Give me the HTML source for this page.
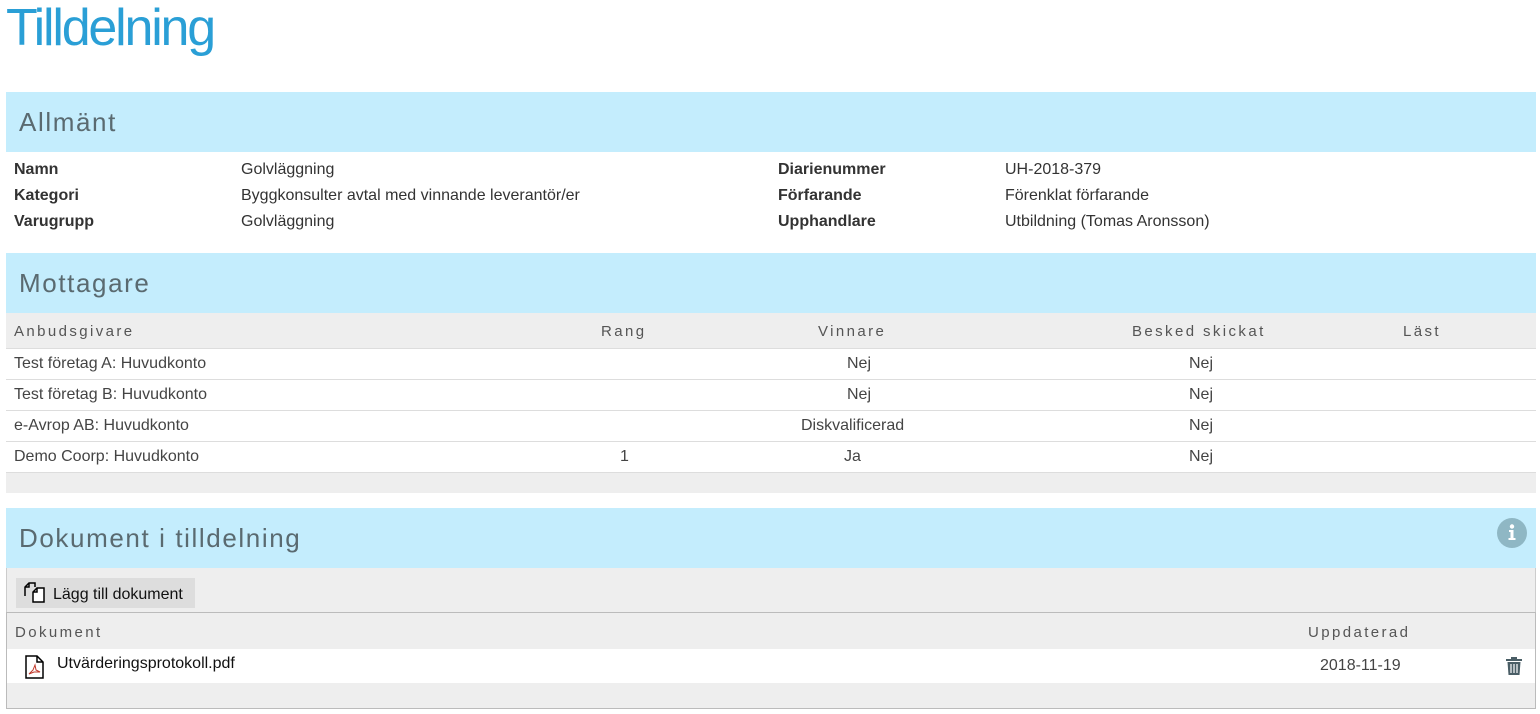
<!DOCTYPE html>
<html><head><meta charset="utf-8"><style>
*{box-sizing:border-box;margin:0;padding:0}
body{width:1540px;height:714px;background:#fff;font-family:"Liberation Sans",sans-serif;color:#333;position:relative;overflow:hidden}
.abs{position:absolute}
h1{position:absolute;left:6px;top:-2px;font-size:52px;font-weight:normal;color:#2a9fd6;letter-spacing:-2.2px}
.band{position:absolute;left:6px;width:1530px;height:60px;background:#c4edfd}
.band span{position:absolute;left:13px;top:15px;font-size:26px;letter-spacing:1.6px;color:#5a6a70}
.t{position:absolute;font-size:16px;line-height:20px;top:0}
.b{font-weight:bold;color:#333}
.th{position:absolute;font-size:15px;letter-spacing:2.4px;color:#555}
.row{position:absolute;left:6px;width:1530px;height:31px;border-bottom:1px solid #ddd;background:#fff}
.c{position:absolute;font-size:16px;top:6px;color:#444}
</style></head><body>
<h1>Tilldelning</h1>
<div class="band" style="top:92px"><span>Allmänt</span></div>
<div class="t b" style="left:14px;top:160px">Namn</div>
<div class="t b" style="left:14px;top:186px">Kategori</div>
<div class="t b" style="left:14px;top:212px">Varugrupp</div>
<div class="t" style="left:241px;top:160px">Golvläggning</div>
<div class="t" style="left:241px;top:186px">Byggkonsulter avtal med vinnande leverantör/er</div>
<div class="t" style="left:241px;top:212px">Golvläggning</div>
<div class="t b" style="left:778px;top:160px">Diarienummer</div>
<div class="t b" style="left:778px;top:186px">Förfarande</div>
<div class="t b" style="left:778px;top:212px">Upphandlare</div>
<div class="t" style="left:1005px;top:160px">UH-2018-379</div>
<div class="t" style="left:1005px;top:186px">Förenklat förfarande</div>
<div class="t" style="left:1005px;top:212px">Utbildning (Tomas Aronsson)</div>

<div class="band" style="top:253px"><span>Mottagare</span></div>
<div class="abs" style="left:6px;top:313px;width:1530px;height:180px;background:#eee"></div>
<div class="abs" style="left:6px;top:348px;width:1530px;border-top:1px solid #ddd"></div>
<div class="th" style="left:14px;top:323px">Anbudsgivare</div>
<div class="th" style="left:601px;top:323px">Rang</div>
<div class="th" style="left:818px;top:323px">Vinnare</div>
<div class="th" style="left:1132px;top:323px">Besked skickat</div>
<div class="th" style="left:1403px;top:323px">Läst</div>
<div class="row" style="top:349px"><div class="c" style="left:8px">Test företag A: Huvudkonto</div><div class="c" style="left:841px">Nej</div><div class="c" style="left:1183px">Nej</div></div>
<div class="row" style="top:380px"><div class="c" style="left:8px">Test företag B: Huvudkonto</div><div class="c" style="left:841px">Nej</div><div class="c" style="left:1183px">Nej</div></div>
<div class="row" style="top:411px"><div class="c" style="left:8px">e-Avrop AB: Huvudkonto</div><div class="c" style="left:795px">Diskvalificerad</div><div class="c" style="left:1183px">Nej</div></div>
<div class="row" style="top:442px"><div class="c" style="left:8px">Demo Coorp: Huvudkonto</div><div class="c" style="left:614px">1</div><div class="c" style="left:838px">Ja</div><div class="c" style="left:1183px">Nej</div></div>

<div class="band" style="top:508px"><span>Dokument i tilldelning</span>
<svg class="abs" style="left:1490px;top:9px" width="32" height="32" viewBox="0 0 32 32"><circle cx="16" cy="16" r="15" fill="#8fb7c4"/><circle cx="16" cy="9.5" r="2.2" fill="#fff"/><path d="M13 13h4.5v8h2v2h-7v-2h2v-6h-1.5z" fill="#fff"/></svg></div>
<div class="abs" style="left:6px;top:568px;width:1530px;height:44px;background:#eee;border-left:1px solid #ccc;border-right:1px solid #ccc"></div>
<div class="abs" style="left:16px;top:578px;width:179px;height:30px;background:#ddd"></div>
<svg class="abs" style="left:22px;top:582px" width="24" height="22" viewBox="0 0 24 22"><path d="M3 14V5l4-4h6v4" fill="none" stroke="#000" stroke-width="1.5"/><path d="M3 5h4V1" fill="none" stroke="#000" stroke-width="1.5"/><path d="M11 20V10l4-4h7v14z" fill="#fff" stroke="#000" stroke-width="1.5"/><path d="M11 10h4V6" fill="none" stroke="#000" stroke-width="1.5"/></svg>
<div class="abs" style="left:53px;top:586px;font-size:16px;color:#111">Lägg till dokument</div>
<div class="abs" style="left:6px;top:612px;width:1530px;height:97px;background:#eee;border:1px solid #bbb"></div>
<div class="th" style="left:15px;top:624px">Dokument</div>
<div class="th" style="left:1308px;top:624px">Uppdaterad</div>
<div class="abs" style="left:7px;top:649px;width:1528px;height:34px;background:#fff"></div>
<svg class="abs" style="left:24px;top:655px" width="22" height="24" viewBox="0 0 22 24"><path d="M2 1h11l6 6v16H2z" fill="#fff" stroke="#000" stroke-width="1.5"/><path d="M13 1v6h6" fill="none" stroke="#000" stroke-width="1.5"/><path d="M5 19l4-4 2-5 1 5 4 2-6 0z" fill="none" stroke="#c0392b" stroke-width="1"/></svg>
<div class="abs" style="left:57px;top:655px;font-size:16px;color:#111">Utvärderingsprotokoll.pdf</div>
<div class="abs" style="left:1320px;top:657px;font-size:16px;color:#444">2018-11-19</div>
<svg class="abs" style="left:1505px;top:656px" width="18" height="20" viewBox="0 0 18 20"><path d="M6 1h6v2h5v2H1V3h5z" fill="#4a5e66"/><path d="M2.5 6h13l-1 13h-11z" fill="#4a5e66"/><path d="M6 8v9M9 8v9M12 8v9" stroke="#fff" stroke-width="1.2"/></svg>
</body></html>
